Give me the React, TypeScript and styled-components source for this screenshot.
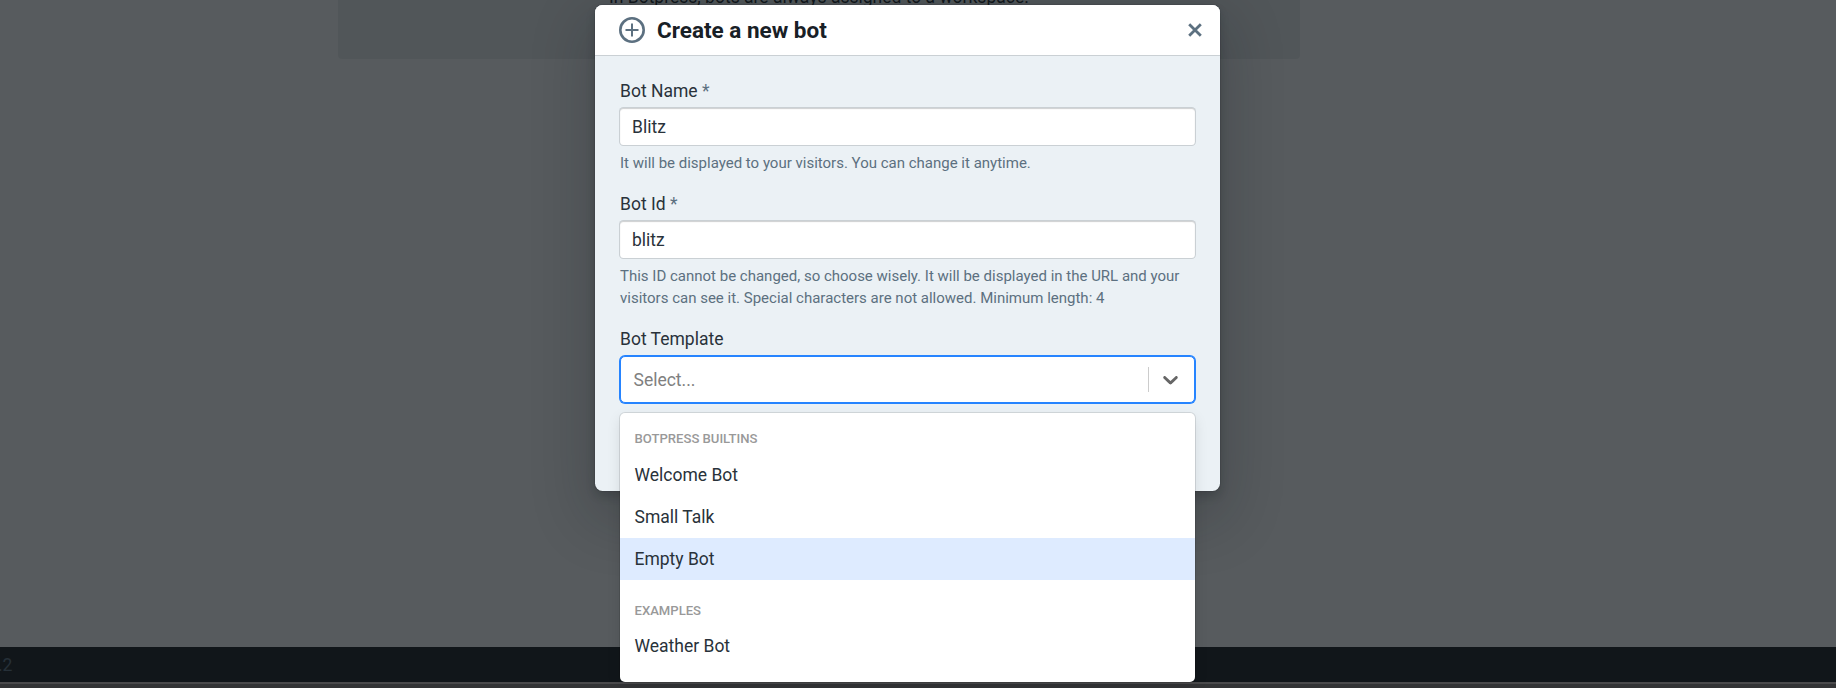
import styled, { createGlobalStyle } from "styled-components";

const GlobalStyle = createGlobalStyle`
  html, body {
    margin: 0;
    padding: 0;
    height: 100%;
    overflow: hidden;
  }
  body {
    font-family: "Roboto", "Liberation Sans", sans-serif;
    color: #182026;
  }
  * {
    box-sizing: border-box;
  }
`;

const App = () => {
  return (
    <Page>
      <GlobalStyle />
      <Content>
        <IntroCard>
          <IntroText>In Botpress, bots are always assigned to a workspace.</IntroText>
        </IntroCard>
      </Content>
      <Footer>
        <Version>.2</Version>
      </Footer>
      <FooterEdge />

      <Overlay>
        <Dialog>
          <DialogHeader>
            <PlusIcon viewBox="0 0 26 26" aria-hidden="true">
              <circle cx="13" cy="13" r="11.7" fill="none" stroke="#5c7080" strokeWidth="2.6" />
              <path d="M13 6.5v13M6.5 13h13" fill="none" stroke="#5c7080" strokeWidth="2" />
            </PlusIcon>
            <DialogTitle>Create a new bot</DialogTitle>
            <CloseIcon viewBox="0 0 14 14" aria-hidden="true">
              <path d="M1.2 1.2l11.6 11.6M12.8 1.2L1.2 12.8" fill="none" stroke="#5c7080" strokeWidth="2.8" />
            </CloseIcon>
          </DialogHeader>

          <DialogBody>
            <Field>
              <Label>
                Bot Name <Required>*</Required>
              </Label>
              <TextInput readOnly value="Blitz" />
              <Help>It will be displayed to your visitors. You can change it anytime.</Help>
            </Field>

            <Field>
              <Label>
                Bot Id <Required>*</Required>
              </Label>
              <TextInput readOnly value="blitz" />
              <Help>
                This ID cannot be changed, so choose wisely. It will be displayed in the URL and your
                visitors can see it. Special characters are not allowed. Minimum length: 4
              </Help>
            </Field>

            <SelectField>
              <Label>Bot Template</Label>
              <SelectControl>
                <Placeholder>Select...</Placeholder>
                <SelectSeparator />
                <ChevronIcon viewBox="0 0 20 20" aria-hidden="true">
                  <path d="M4.516 7.548c0.436-0.446 1.043-0.481 1.576 0l3.908 3.747 3.908-3.747c0.533-0.481 1.141-0.446 1.574 0 0.436 0.445 0.408 1.197 0 1.615-0.406 0.418-4.695 4.502-4.695 4.502-0.217 0.223-0.502 0.335-0.787 0.335s-0.57-0.112-0.789-0.335c0 0-4.287-4.084-4.695-4.502s-0.436-1.17 0-1.615z" />
                </ChevronIcon>
              </SelectControl>
              <Menu>
                <GroupHeading>Botpress Builtins</GroupHeading>
                <Option>Welcome Bot</Option>
                <Option>Small Talk</Option>
                <Option $focused>Empty Bot</Option>
                <GroupHeading $spaced>Examples</GroupHeading>
                <Option>Weather Bot</Option>
              </Menu>
            </SelectField>
          </DialogBody>
        </Dialog>
      </Overlay>
    </Page>
  );
};

export default App;

// Styled Components
const Page = styled.div`
  position: relative;
  display: flex;
  flex-direction: column;
  width: 1836px;
  height: 688px;
  overflow: hidden;
  background: #fff;
`;

const Content = styled.main`
  flex: 1;
  padding-left: 338px;
`;

const IntroCard = styled.section`
  width: 962px;
  height: 59px;
  padding: 0 0 51px 271px;
  display: flex;
  align-items: flex-end;
  overflow: hidden;
  background: #ecefee;
  border-radius: 0 0 4px 4px;
`;

const IntroText = styled.p`
  margin: 0;
  font-size: 17.5px;
  line-height: 21px;
  white-space: nowrap;
  color: #182026;
`;

const Footer = styled.footer`
  height: 35px;
  display: flex;
  align-items: center;
  background: #17191d;
`;

const Version = styled.span`
  margin-left: -2px;
  font-size: 17.5px;
  color: #5c7080;
`;

const FooterEdge = styled.div`
  height: 6px;
  background: #887e7a;
  border-top: 2px solid #d2c7c1;
`;

const Overlay = styled.div`
  position: absolute;
  inset: 0;
  display: flex;
  justify-content: center;
  align-items: flex-start;
  padding: 5px 21px 0 0;
  background: rgba(16, 22, 26, 0.7);
`;

const Dialog = styled.div`
  width: 625px;
  height: 486px;
  background: #ebf1f5;
  border-radius: 7.5px;
  box-shadow: 0 0 0 1px rgba(16, 22, 26, 0.1), 0 5px 10px rgba(16, 22, 26, 0.2),
    0 22px 58px 8px rgba(16, 22, 26, 0.2);
`;

const DialogHeader = styled.header`
  height: 50px;
  display: flex;
  align-items: center;
  gap: 12px;
  padding: 0 18px 0 24px;
  background: #fff;
  border-radius: 7.5px 7.5px 0 0;
  box-shadow: 0 1px 0 rgba(16, 22, 26, 0.15);
`;

const PlusIcon = styled.svg`
  width: 26px;
  height: 26px;
  flex: none;
`;

const DialogTitle = styled.h4`
  flex: 1;
  margin: 0;
  font-size: 22.5px;
  line-height: 28px;
  font-weight: 700;
  color: #182026;
`;

const CloseIcon = styled.svg`
  width: 14px;
  height: 14px;
  flex: none;
`;

const DialogBody = styled.div`
  display: flex;
  flex-direction: column;
  gap: 19px;
  padding: 25px 25px 0;
`;

const Field = styled.div`
  display: flex;
  flex-direction: column;
`;

const SelectField = styled(Field)`
  position: relative;
`;

const Label = styled.label`
  font-size: 17.5px;
  line-height: 21px;
  padding-top: 1px;
  margin-bottom: 6px;
  color: #29323a;
`;

const Required = styled.span`
  color: #5c7080;
`;

const TextInput = styled.input`
  width: 100%;
  height: 37px;
  padding: 0 12px;
  border: none;
  border-radius: 3.5px;
  outline: none;
  background: #fff;
  font-family: inherit;
  font-size: 17.5px;
  color: #29323a;
  box-shadow: 0 0 0 1px rgba(16, 22, 26, 0.15), inset 0 1px 1px rgba(16, 22, 26, 0.2);
`;

const Help = styled.div`
  margin-top: 7px;
  font-size: 15px;
  line-height: 22px;
  color: #5c7080;
`;

const SelectControl = styled.div`
  height: 47px;
  display: flex;
  align-items: center;
  padding: 0 11.5px 0 12.5px;
  background: #fff;
  border: 1.5px solid #2684ff;
  border-radius: 5px;
  box-shadow: 0 0 0 1px #2684ff;
`;

const Placeholder = styled.span`
  flex: 1;
  font-size: 17.5px;
  color: #808080;
`;

const SelectSeparator = styled.span`
  width: 1px;
  height: 25px;
  background: #ccc;
  margin-right: 8.5px;
`;

const ChevronIcon = styled.svg`
  width: 25px;
  height: 25px;
  fill: #666;
`;

const Menu = styled.div`
  position: absolute;
  top: 85px;
  left: 0;
  right: 0;
  height: 269px;
  padding: 16px 0 0;
  background: #fff;
  border-radius: 5px;
  box-shadow: 0 0 0 1px rgba(0, 0, 0, 0.1), 0 5px 14px rgba(0, 0, 0, 0.1);
`;

const GroupHeading = styled.div<{ $spaced?: boolean }>`
  margin-top: ${(p) => (p.$spaced ? "21px" : "0")};
  margin-bottom: ${(p) => (p.$spaced ? "4px" : "5px")};
  padding: 0 14.5px;
  font-size: 13.1px;
  line-height: 20px;
  font-weight: 500;
  text-transform: uppercase;
  color: #999;
`;

const Option = styled.div<{ $focused?: boolean }>`
  height: 42px;
  padding: 0 14.5px;
  display: flex;
  align-items: center;
  font-size: 17.5px;
  color: #29323a;
  background: ${(p) => (p.$focused ? "#deebff" : "transparent")};
`;
